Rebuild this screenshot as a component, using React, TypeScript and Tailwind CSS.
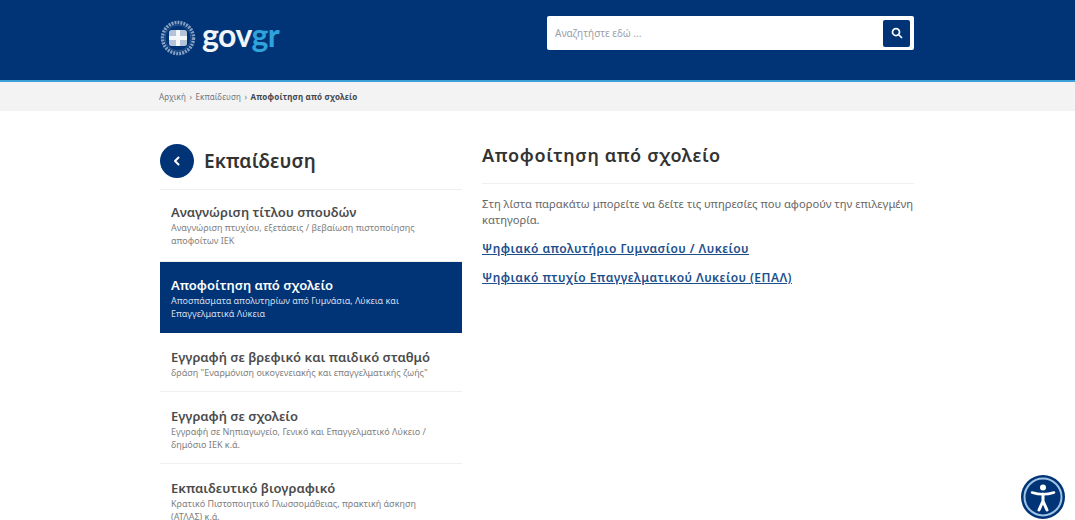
const FONT = "font-['Noto_Sans',sans-serif]";

const categories = [
  {
    title: "Αναγνώριση τίτλου σπουδών",
    text: "Αναγνώριση πτυχίου, εξετάσεις / βεβαίωση πιστοποίησης αποφοίτων ΙΕΚ",
    height: "h-[72px] pt-[14px]",
  },
  {
    title: "Αποφοίτηση από σχολείο",
    text: "Αποσπάσματα απολυτηρίων από Γυμνάσια, Λύκεια και Επαγγελματικά Λύκεια",
    height: "h-[71px] pt-[15px]",
    active: true,
  },
  {
    title: "Εγγραφή σε βρεφικό και παιδικό σταθμό",
    text: "δράση \"Εναρμόνιση οικογενειακής και επαγγελματικής ζωής\"",
    height: "h-[59px] pt-[16px]",
  },
  {
    title: "Εγγραφή σε σχολείο",
    text: "Εγγραφή σε Νηπιαγωγείο, Γενικό και Επαγγελματικό Λύκειο / δημόσιο ΙΕΚ κ.ά.",
    height: "h-[72px] pt-[16px]",
  },
  {
    title: "Εκπαιδευτικό βιογραφικό",
    text: "Κρατικό Πιστοποιητικό Γλωσσομάθειας, πρακτική άσκηση (ΑΤΛΑΣ) κ.ά.",
    height: "h-[60px] pt-[16px]",
  },
];

function Emblem() {
  return (
    <svg width="36" height="36" viewBox="0 0 36 36" className="shrink-0">
      <circle cx="18" cy="18" r="15.500" fill="none" stroke="#86a0c2" strokeWidth="3.500" strokeDasharray="2 1" />
      <circle cx="18" cy="18" r="13" fill="none" stroke="#2f5a92" strokeWidth="1" />
      <rect x="9" y="10" width="18" height="16" rx="2.500" fill="#b4c3d8" />
      <path d="M16 10h4v6h7v4h-7v6h-4v-6H9v-4h7z" fill="#f4f7fa" />
    </svg>
  );
}

function CategoryRow({ item }: { item: (typeof categories)[number] }) {
  return (
    <div
      className={`${item.height} pl-[11px] pr-[30px] ${
        item.active ? "bg-[#003476]" : "border-b border-[#efefef]"
      }`}
    >
      <div
        className={`text-[13px] leading-[16px] font-semibold whitespace-nowrap ${
          item.active ? "text-white" : "text-[#4b4b4b]"
        }`}
      >
        {item.title}
      </div>
      <p
        className={`mt-[2px] text-[9px] leading-[12.5px] ${
          item.active ? "text-[#d5deea]" : "text-[#808080]"
        }`}
      >
        {item.text}
      </p>
    </div>
  );
}

export default function App() {
  return (
    <div className={`${FONT} relative h-[520px] overflow-hidden bg-white`}>
      {/* Header */}
      <header className="h-[82px] bg-[#003476] border-b-2 border-[#3d9fd8]">
        <div className="w-[754px] ml-[160px] h-[80px] flex items-start justify-between">
          <div className="flex items-center gap-[6px] pt-[20px]">
            <Emblem />
            <span className="font-['Lato',sans-serif] text-[32px] leading-[34px] font-bold tracking-[-0.5px] text-[#f1f5f9] -mt-[6px]">
              gov<span className="text-[#2ea3dc]">gr</span>
            </span>
          </div>
          <div className="mt-[16px] w-[367px] h-[34px] bg-white rounded-[2px] flex items-center justify-between pl-[8px] pr-[4px]">
            <span className="text-[10px] text-[#9a9eaa]">Αναζητήστε εδώ ...</span>
            <button className="w-[27px] h-[27px] rounded-[2px] bg-[#003476] flex items-center justify-center">
              <svg width="12" height="12" viewBox="0 0 24 24" fill="none" stroke="#fff" strokeWidth="3.500" strokeLinecap="round">
                <circle cx="10" cy="10" r="7" />
                <path d="m21 21-6-6" />
              </svg>
            </button>
          </div>
        </div>
      </header>

      {/* Breadcrumb */}
      <nav className="h-[29px] bg-[#f3f3f3] flex items-center pl-[159px] gap-[3.5px] text-[8px] tracking-[0.1px] text-[#6f7680]">
        <span>Αρχική</span>
        <span>›</span>
        <span>Εκπαίδευση</span>
        <span>›</span>
        <span className="font-bold tracking-[0.2px] text-[#3f4650]">Αποφοίτηση από σχολείο</span>
      </nav>

      {/* Content */}
      <main className="w-[754px] ml-[160px] flex gap-[20px] pt-[33px]">
        <aside className="w-[302px] shrink-0">
          <div className="h-[46px] border-b border-[#efefef] flex items-start gap-[10px]">
            <span className="w-[34px] h-[34px] rounded-full bg-[#003476] flex items-center justify-center">
              <svg width="12" height="12" viewBox="0 0 24 24" fill="none" stroke="#fff" strokeWidth="4" strokeLinecap="round" strokeLinejoin="round">
                <path d="m15 5-7 7 7 7" />
              </svg>
            </span>
            <h2 className="text-[19px] leading-[34px] font-semibold tracking-[0.1px] text-[#333]">Εκπαίδευση</h2>
          </div>
          {categories.map((item) => (
            <CategoryRow key={item.title} item={item} />
          ))}
        </aside>

        <section className="flex-1 min-w-0">
          <h1 className="h-[40px] border-b border-[#efefef] text-[18px] leading-[22px] font-semibold tracking-[0.65px] text-[#333]">
            Αποφοίτηση από σχολείο
          </h1>
          <p className="mt-[12px] text-[11.2px] leading-[16px] text-[#666]">
            Στη λίστα παρακάτω μπορείτε να δείτε τις υπηρεσίες που αφορούν την επιλεγμένη κατηγορία.
          </p>
          <a className="block mt-[12px] text-[12px] leading-[17px] font-semibold tracking-[0.45px] underline text-[#1d4f8b]">
            Ψηφιακό απολυτήριο Γυμνασίου / Λυκείου
          </a>
          <a className="block mt-[12px] text-[12px] leading-[17px] font-semibold tracking-[0.45px] underline text-[#1d4f8b]">
            Ψηφιακό πτυχίο Επαγγελματικού Λυκείου (ΕΠΑΛ)
          </a>
        </section>
      </main>

      {/* Accessibility button */}
      <button className="absolute right-[10px] bottom-[1px] w-[44px] h-[44px] rounded-full bg-[#003476] flex items-center justify-center">
        <svg width="44" height="44" viewBox="0 0 44 44" fill="none">
          <circle cx="22" cy="22" r="18.500" stroke="#9fc4e6" strokeWidth="2" />
          <circle cx="22" cy="12.500" r="3" fill="#fff" />
          <path d="M11 17.500c4 1.300 7.500 1.800 11 1.800s7-.5 11-1.800" stroke="#fff" strokeWidth="2.600" strokeLinecap="round" />
          <path d="M22 19v7m0 0-4 9m4-9 4 9" stroke="#fff" strokeWidth="3" strokeLinecap="round" strokeLinejoin="round" />
        </svg>
      </button>
    </div>
  );
}
